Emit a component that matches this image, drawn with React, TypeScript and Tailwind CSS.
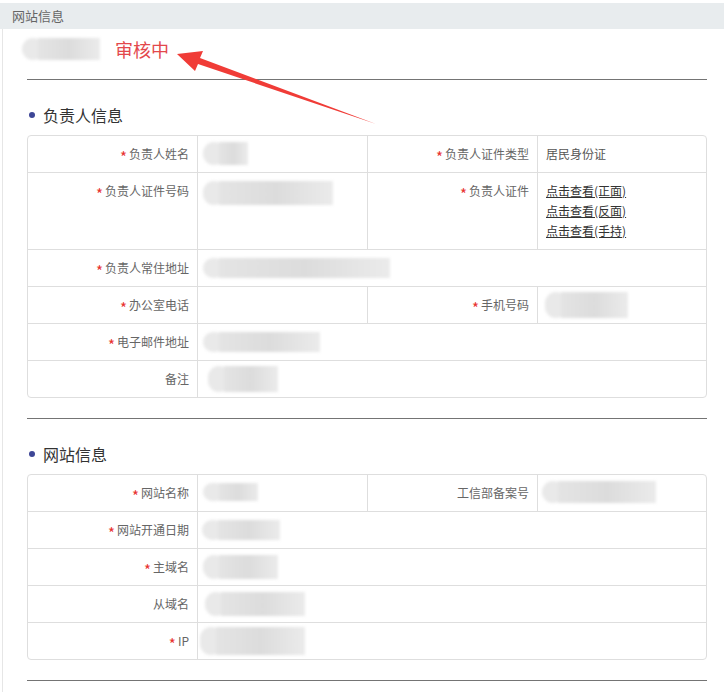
import type { ReactNode } from 'react';

const Req = () => (
  <span className="relative top-[4px] mr-[2px] text-[15px] leading-[0] text-[#e8322f]">*</span>
);

const Label = ({ text, req }: { text: string; req?: boolean }) => (
  <div className="w-[170px] shrink-0 border-r border-[#dedede] px-2 py-2 text-right leading-[20px] text-[#666]">
    {req && <Req />}
    {text}
  </div>
);

const Value = ({ children, last }: { children?: ReactNode; last?: boolean }) => (
  <div
    className={
      last
        ? 'min-w-0 flex-1 px-2 py-2 leading-[20px] text-[#555]'
        : 'w-[170px] shrink-0 border-r border-[#dedede] px-2 py-2 leading-[20px] text-[#555]'
    }
  >
    {children}
  </div>
);

// blurred-out personal data
const Blob = ({ className }: { className: string }) => (
  <div className={`flex items-center blur-[1.5px] ${className}`}>
    <div className="h-full w-[22px] shrink-0 rounded-full bg-[#e9e9e9]" />
    <div className="-ml-[6px] h-full flex-1 bg-linear-to-r from-[#e4e4e4] via-[#dcdcdc] to-[#ebebeb]" />
  </div>
);

const Row = ({ children }: { children: ReactNode }) => (
  <div className="flex border-t border-[#dedede] first:border-t-0">{children}</div>
);

const SectionTitle = ({ text }: { text: string }) => (
  <div className="mt-[23px] flex h-[24px] items-center">
    <span className="ml-[2px] mr-[8px] h-[6px] w-[6px] rounded-full bg-[#3d4696]" />
    <span className="text-[16px] leading-[24px] text-[#333]">{text}</span>
  </div>
);

const Divider = ({ className }: { className: string }) => (
  <div className={`h-px bg-[#747474] ${className}`} />
);

const ArrowMark = () => (
  <svg className="pointer-events-none absolute left-0 top-0" width="724" height="692">
    <polygon
      points="177,54 203,51 200,58 376,124 198,64 195,71"
      fill="#f03c37"
    />
  </svg>
);

export default function App() {
  return (
    <div className="relative min-h-[692px] w-[724px] bg-white pt-[3px] font-['Noto_Sans_CJK_SC','Noto_Sans',sans-serif] text-[12px]">
      <div className="h-[26px] bg-[#e8ecee] pl-3 text-[13px] leading-[26px] text-[#666]">网站信息</div>

      <div className="ml-[2px] border-l border-[#e6e6e6] pb-[12px] pl-[24px] pr-[17px] pt-[9px]">
        <div className="flex h-[22px] items-center">
          <Blob className="-ml-[5px] h-[22px] w-[78px]" />
          <span className="ml-[15px] text-[18px] leading-[22px] text-[#e3484c]">审核中</span>
        </div>

        <Divider className="mt-[19px]" />

        <SectionTitle text="负责人信息" />
        <div className="mt-[8px] overflow-hidden rounded-[4px] border border-[#dedede]">
          <Row>
            <Label text="负责人姓名" req />
            <Value>
              <Blob className="-my-[2px] -ml-[3px] h-[23px] w-[45px]" />
            </Value>
            <Label text="负责人证件类型" req />
            <Value last>居民身份证</Value>
          </Row>
          <Row>
            <Label text="负责人证件号码" req />
            <Value>
              <Blob className="-ml-[3px] h-[24px] w-[130px]" />
            </Value>
            <Label text="负责人证件" req />
            <Value last>
              <div className="text-[#333] underline">点击查看(正面)</div>
              <div className="text-[#333] underline">点击查看(反面)</div>
              <div className="text-[#333] underline">点击查看(手持)</div>
            </Value>
          </Row>
          <Row>
            <Label text="负责人常住地址" req />
            <Value last>
              <Blob className="-ml-[3px] h-[20px] w-[187px]" />
            </Value>
          </Row>
          <Row>
            <Label text="办公室电话" req />
            <Value />
            <Label text="手机号码" req />
            <Value last>
              <Blob className="-my-[3px] -ml-[1px] h-[26px] w-[83px]" />
            </Value>
          </Row>
          <Row>
            <Label text="电子邮件地址" req />
            <Value last>
              <Blob className="-ml-[3px] h-[20px] w-[117px]" />
            </Value>
          </Row>
          <Row>
            <Label text="备注" />
            <Value last>
              <Blob className="-my-[3px] ml-[2px] h-[26px] w-[70px]" />
            </Value>
          </Row>
        </div>

        <Divider className="mt-[20px]" />

        <SectionTitle text="网站信息" />
        <div className="mt-[8px] overflow-hidden rounded-[4px] border border-[#dedede]">
          <Row>
            <Label text="网站名称" req />
            <Value>
              <Blob className="-ml-[3px] h-[18px] w-[55px]" />
            </Value>
            <Label text="工信部备案号" />
            <Value last>
              <Blob className="-my-[2px] -ml-[4px] h-[22px] w-[114px]" />
            </Value>
          </Row>
          <Row>
            <Label text="网站开通日期" req />
            <Value last>
              <Blob className="-ml-[4px] h-[20px] w-[78px]" />
            </Value>
          </Row>
          <Row>
            <Label text="主域名" req />
            <Value last>
              <Blob className="-my-[2px] -ml-[3px] h-[24px] w-[75px]" />
            </Value>
          </Row>
          <Row>
            <Label text="从域名" />
            <Value last>
              <Blob className="-my-[2px] -ml-[1px] h-[24px] w-[100px]" />
            </Value>
          </Row>
          <Row>
            <Label text="IP" req />
            <Value last>
              <Blob className="-my-[4px] -ml-[6px] h-[28px] w-[105px]" />
            </Value>
          </Row>
        </div>

        <Divider className="mt-[20px]" />
      </div>

      <ArrowMark />
    </div>
  );
}
